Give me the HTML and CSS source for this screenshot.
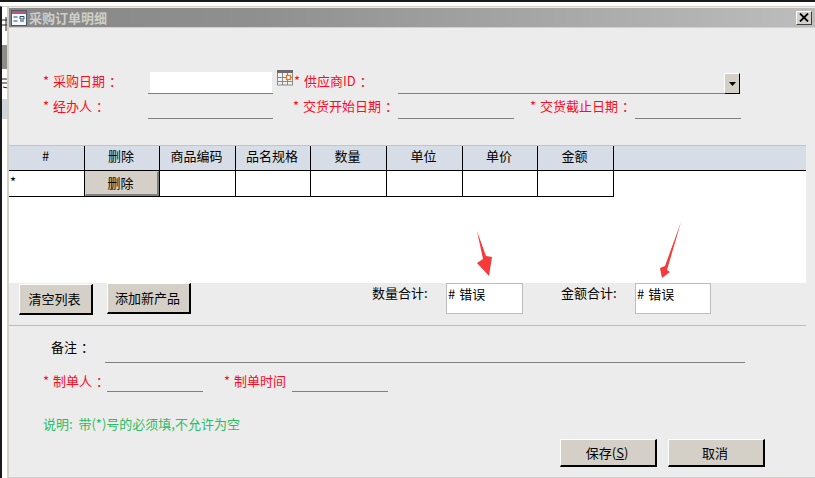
FILE: index.html
```html
<!DOCTYPE html>
<html lang="zh">
<head>
<meta charset="utf-8">
<title>采购订单明细</title>
<link rel="stylesheet" href="styles.css">
</head>
<body>
<div class="topbar"></div>
<div class="desk">
  <div class="strip">
    <svg class="s-a" width="6" height="14" viewBox="0 0 6 14"><path d="M0 3h6M4 0v14M0 8h6" stroke="#222" fill="none"/></svg>
    <span class="s-b"></span>
    <svg class="s-c" width="6" height="12" viewBox="0 0 6 12"><path d="M0 2h6M0 6h6M1 10l5 1" stroke="#222" fill="none"/></svg>
    <span class="s-d"></span>
  </div>
  <main class="win">
    <header class="titlebar">
      <svg class="appicon" width="16" height="16" viewBox="0 0 16 16"><rect x="0.5" y="0.5" width="15" height="15" fill="#f4f8fb" stroke="#4a5a68"/><rect x="1" y="1" width="14" height="3" fill="#b8586e"/><path d="M2.500 7h4M2.500 11h4M9 6.500h4v2.500h-4zM9 11h4" stroke="#2a4a66" fill="none"/></svg>
      <span class="titletext">采购订单明细</span>
      <button class="close" type="button" aria-label="关闭"><svg width="10" height="9" viewBox="0 0 10 9"><path d="M1 0.500l8 8M9 0.500l-8 8" stroke="#000" stroke-width="1.800" fill="none"/></svg></button>
    </header>

    <section class="head">
      <div class="row row1">
        <label class="req w105">* 采购日期 ：</label>
        <div class="field date"></div>
        <svg class="cal" width="17" height="16" viewBox="0 0 17 16"><rect width="16" height="15" fill="#f2f2f2"/><rect width="16" height="3" fill="#6b6b6b"/><path d="M0.500 3v12h15.500M5.500 3v12M10.500 3v12M15.500 3v12M0 7.500h16M0 11.500h16" stroke="#8a8a8a" fill="none"/><rect x="9.500" y="5.500" width="4" height="4" fill="#fff" stroke="#e8781e" stroke-width="1.300"/></svg>
        <label class="req w104">* 供应商ID ：</label>
        <div class="field supplier"></div>
        <button class="drop" type="button" aria-label="展开"><svg width="7" height="4" viewBox="0 0 7 4"><path d="M0 0h7l-3.500 4z" fill="#000"/></svg></button>
      </div>
      <div class="row row2">
        <label class="req w105">* 经办人 ：</label>
        <div class="field w125"></div>
        <label class="req w105 gap20">* 交货开始日期 ：</label>
        <div class="field w116"></div>
        <label class="req w105 gap16">* 交货截止日期 ：</label>
        <div class="field w106"></div>
      </div>
    </section>

    <section class="sub">
      <div class="grid ghead">
        <div>#</div><div>删除</div><div>商品编码</div><div>品名规格</div><div>数量</div><div>单位</div><div>单价</div><div>金额</div>
      </div>
      <div class="bodywrap">
        <div class="grid gbody">
          <div class="star">*</div><div class="delcell"><button class="btn del" type="button">删除</button></div><div></div><div></div><div></div><div></div><div></div><div></div>
        </div>
      </div>
      <div class="subfoot">
        <button class="btn clear" type="button">清空列表</button>
        <button class="btn add" type="button">添加新产品</button>
        <span class="sumlabel sum1">数量合计:</span>
        <output class="sumbox"># 错误</output>
        <span class="sumlabel sum2">金额合计:</span>
        <output class="sumbox"># 错误</output>
      </div>
    </section>

    <section class="foot">
      <div class="row memo">
        <label class="memolabel">备注 ：</label>
        <div class="field memofield"></div>
      </div>
      <div class="row maker">
        <label class="req w64">* 制单人 ：</label>
        <div class="field w96"></div>
        <label class="req w68 gap21">* 制单时间</label>
        <div class="field w96"></div>
      </div>
      <p class="note">说明:&nbsp; 带(*)号的必须填,不允许为空</p>
      <div class="actions">
        <button class="btn act" type="button">保存(<u>S</u>)</button>
        <button class="btn act" type="button">取消</button>
      </div>
    </section>
  </main>
</div>
<svg class="arrows" width="815" height="478" viewBox="0 0 815 478"><path d="M477 231L486 256L492 257L489 276L477 263L483 259Z" fill="#f63a3a"/><path d="M681 222L667 270L670 272L662 278L660 268L665 266Z" fill="#f63a3a"/></svg>
</body>
</html>
```
FILE: styles.css
```css
* { box-sizing: border-box; }
html, body { margin: 0; padding: 0; }
body {
  width: 815px;
  height: 478px;
  overflow: hidden;
  background: #fff;
  font-family: "Noto Sans CJK SC", "Liberation Sans", sans-serif;
  font-size: 13px;
  line-height: 18px;
  color: #000;
}
.topbar { height: 6px; border-top: 2px solid #1a1a1a; background: #fff; }
.desk { display: flex; height: 472px; }

.strip {
  width: 9px;
  flex: none;
  height: 472px;
  display: flex;
  flex-direction: column;
  overflow: hidden;
  background: #fff;
  border-right: 2px solid #d4d0c8;
  border-left: 2px solid #1a1a1a;
  border-top: 1px solid #d4d0c8;
}
.strip svg, .strip span { display: block; flex: none; }
.s-a { margin-top: 10px; }
.s-b { height: 24px; margin-top: 14px; background: #8d8d88; }
.s-c { margin-top: 8px; }
.s-d { margin-top: 10px; height: 20px; background: #cfd4da; }

.win { flex: 1; height: 472px; background: #ececec; border-bottom: 1px solid #d4d0c8; border-top: 1px solid #d4d0c8; }

.titlebar {
  height: 20px;
  margin-top: 1px;
  display: flex;
  align-items: center;
  padding: 0 2px 0 2px;
  border-bottom: 1px solid #d4d0c8;
  background: linear-gradient(90deg, #888 0%, #8f8f8f 30%, #a9a9a9 70%, #bdbdbd 100%);
}
.appicon { flex: none; }
.titletext { margin-left: 2px; font-size: 13px; font-weight: 700; color: #cfcfc8; line-height: 16px; }
.close {
  margin-left: auto;
  margin-right: 1px;
  width: 16px;
  height: 14px;
  padding: 0;
  display: flex;
  align-items: center;
  justify-content: center;
  background: #d4d0c8;
  border: 1px solid;
  border-color: #fff #404040 #404040 #fff;
}

.head { height: 117px; padding: 43px 0 0 34px; }
.row { display: flex; align-items: flex-end; }
.row1 { height: 23px; }
.row2 { height: 25px; }
.req { color: #ff0a1e; line-height: 18px; white-space: nowrap; padding-bottom: 4px; word-spacing: 1px; }
.w105 { width: 105px; }
.w104 { width: 104px; }
.w64 { width: 64px; }
.w68 { width: 68px; }
.gap20 { margin-left: 20px; }
.gap16 { margin-left: 16px; }
.gap21 { margin-left: 21px; }
.field { border-bottom: 1px solid #808080; height: 1px; }
.date { width: 125px; height: 22px; background: linear-gradient(#fff, #fff) 2px 0 / 122px 21px no-repeat; }
.cal { align-self: flex-start; margin: -1px 0 0 4px; flex: none; }
.supplier { width: 327px; }
.drop {
  width: 16px;
  height: 21px;
  margin-left: -1px;
  padding: 0;
  display: flex;
  align-items: center;
  justify-content: center;
  background: #d4d0c8;
  border: 1px solid;
  border-color: #fff #000 #000 #fff;
}
.w125 { width: 125px; }
.w116 { width: 116px; }
.w106 { width: 106px; }
.w96 { width: 96px; }

.sub { width: 797px; border-bottom: 1px solid #bcbcbc; }
.grid {
  display: grid;
  grid-template-columns: 76px 75px 76px 75px 76px 76px 75px 76px;
}
.ghead {
  height: 26px;
  background: #d6dde6;
  border-top: 1px solid #c4c4c4;
  border-bottom: 1px solid #000;
  text-align: center;
  line-height: 20px;
}
.ghead div { padding-right: 2px; }
.ghead div, .gbody div { border-right: 1px solid #000; }
.bodywrap { height: 112px; background: #fff; }
.gbody { height: 26px; width: 605px; border-bottom: 1px solid #000; }
.star { padding: 2px 0 0 1px; line-height: 18px; }
.delcell { display: flex; }
.btn {
  font: inherit;
  padding: 0 2px 0 0;
  color: #000;
  background: #d4d0c8;
  border: 2px solid;
  border-color: #fff #000 #000 #fff;
  border-top-width: 1px;
  border-left-width: 1px;
}
.del { width: 75px; height: 25px; border-color: #d4d0c8 #808080 #808080 #d4d0c8; }

.subfoot { height: 42px; display: flex; align-items: flex-start; padding-left: 10px; }
.clear { width: 74px; height: 31px; margin-top: 1px; }
.add { width: 84px; height: 31px; margin-left: 14px; }
.sumlabel { margin-top: 1px; white-space: nowrap; }
.sum1 { margin-left: 181px; width: 74px; }
.sum2 { margin-left: 38px; width: 74px; }
.sumbox {
  display: block;
  width: 77px;
  height: 31px;
  background: #fff;
  border: 1px solid #bcbcbc;
  padding: 1px 0 0 1px;
  word-spacing: 1px;
}
.sumbox:last-child { width: 76px; }

.foot { padding-top: 12px; }
.memo { height: 25px; padding-left: 42px; }
.memolabel { width: 54px; padding-bottom: 7px; word-spacing: 1px; }
.memofield { width: 640px; }
.maker { height: 29px; padding-left: 34px; }
.maker .req { padding-bottom: 2px; }
.note { margin: 23px 0 0 34px; font-size: 13px; line-height: 18px; color: #2dbb60; }
.actions { display: flex; gap: 11px; margin: 6px 0 0 551px; }
.act { width: 97px; height: 28px; }

.arrows { position: absolute; left: 0; top: 0; pointer-events: none; }
```
